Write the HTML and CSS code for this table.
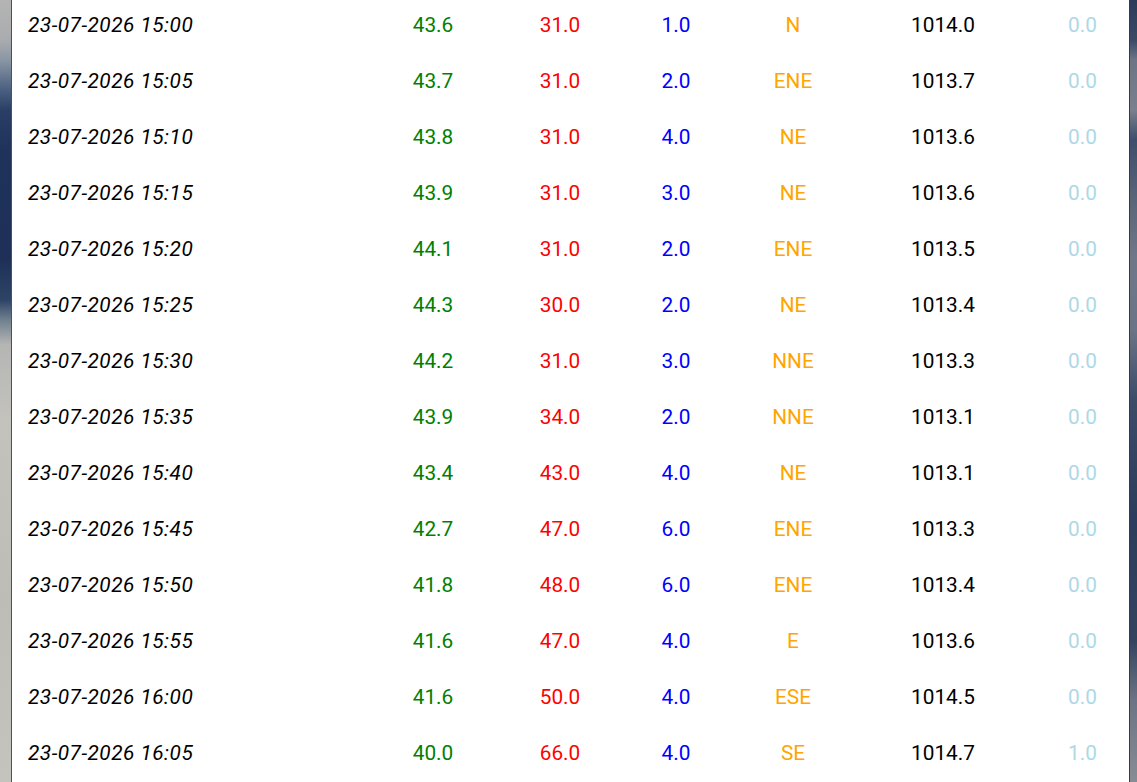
FILE: index.html
```html
<!DOCTYPE html>
<html>
<head>
<meta charset="utf-8">
<link rel="stylesheet" href="styles.css">
<title>Weather log</title>
</head>
<body>
<main class="panel">
<table class="log">
<colgroup>
<col class="c-date"><col class="c-temp"><col class="c-hum"><col class="c-wind"><col class="c-dir"><col class="c-pres"><col class="c-rain">
</colgroup>
<tbody>
<tr><td class="date">23-07-2026 15:00</td><td class="temp">43.6</td><td class="hum">31.0</td><td class="wind">1.0</td><td class="dir">N</td><td class="pres">1014.0</td><td class="rain">0.0</td></tr>
<tr><td class="date">23-07-2026 15:05</td><td class="temp">43.7</td><td class="hum">31.0</td><td class="wind">2.0</td><td class="dir">ENE</td><td class="pres">1013.7</td><td class="rain">0.0</td></tr>
<tr><td class="date">23-07-2026 15:10</td><td class="temp">43.8</td><td class="hum">31.0</td><td class="wind">4.0</td><td class="dir">NE</td><td class="pres">1013.6</td><td class="rain">0.0</td></tr>
<tr><td class="date">23-07-2026 15:15</td><td class="temp">43.9</td><td class="hum">31.0</td><td class="wind">3.0</td><td class="dir">NE</td><td class="pres">1013.6</td><td class="rain">0.0</td></tr>
<tr><td class="date">23-07-2026 15:20</td><td class="temp">44.1</td><td class="hum">31.0</td><td class="wind">2.0</td><td class="dir">ENE</td><td class="pres">1013.5</td><td class="rain">0.0</td></tr>
<tr><td class="date">23-07-2026 15:25</td><td class="temp">44.3</td><td class="hum">30.0</td><td class="wind">2.0</td><td class="dir">NE</td><td class="pres">1013.4</td><td class="rain">0.0</td></tr>
<tr><td class="date">23-07-2026 15:30</td><td class="temp">44.2</td><td class="hum">31.0</td><td class="wind">3.0</td><td class="dir">NNE</td><td class="pres">1013.3</td><td class="rain">0.0</td></tr>
<tr><td class="date">23-07-2026 15:35</td><td class="temp">43.9</td><td class="hum">34.0</td><td class="wind">2.0</td><td class="dir">NNE</td><td class="pres">1013.1</td><td class="rain">0.0</td></tr>
<tr><td class="date">23-07-2026 15:40</td><td class="temp">43.4</td><td class="hum">43.0</td><td class="wind">4.0</td><td class="dir">NE</td><td class="pres">1013.1</td><td class="rain">0.0</td></tr>
<tr><td class="date">23-07-2026 15:45</td><td class="temp">42.7</td><td class="hum">47.0</td><td class="wind">6.0</td><td class="dir">ENE</td><td class="pres">1013.3</td><td class="rain">0.0</td></tr>
<tr><td class="date">23-07-2026 15:50</td><td class="temp">41.8</td><td class="hum">48.0</td><td class="wind">6.0</td><td class="dir">ENE</td><td class="pres">1013.4</td><td class="rain">0.0</td></tr>
<tr><td class="date">23-07-2026 15:55</td><td class="temp">41.6</td><td class="hum">47.0</td><td class="wind">4.0</td><td class="dir">E</td><td class="pres">1013.6</td><td class="rain">0.0</td></tr>
<tr><td class="date">23-07-2026 16:00</td><td class="temp">41.6</td><td class="hum">50.0</td><td class="wind">4.0</td><td class="dir">ESE</td><td class="pres">1014.5</td><td class="rain">0.0</td></tr>
<tr><td class="date">23-07-2026 16:05</td><td class="temp">40.0</td><td class="hum">66.0</td><td class="wind">4.0</td><td class="dir">SE</td><td class="pres">1014.7</td><td class="rain">1.0</td></tr>
</tbody>
</table>
</main>
</body>
</html>
```
FILE: styles.css
```css
html, body {
  margin: 0;
  padding: 0;
  height: 782px;
  overflow: hidden;
}
body {
  font-family: Roboto, "Liberation Sans", sans-serif;
  background:
    linear-gradient(to bottom,
      #2c3b5a 0px, #3a4966 40px, #6d7585 60px, #7a808c 110px,
      #3d4d6c 140px, #5b6579 200px, #707888 260px, #6a7486 330px,
      #3b4b68 400px, #2c3c5c 520px, #33435f 640px, #6c7484 700px,
      #888c94 782px) right top / 7px 100% no-repeat,
    linear-gradient(to bottom,
      #b4b4b3 0px, #a9acaf 40px, #8a96a4 60px, #4a6080 90px,
      #2b3f66 110px, #1f3259 150px, #1e3058 260px, #2e4466 300px,
      #70808f 320px, #b5b6b4 345px, #c3c2bd 420px, #bdbcb7 600px,
      #c4c3be 782px) left top / 11px 100% no-repeat;
  background-color: #8a8f98;
}
.panel {
  margin: 0 7px 0 11px;
  height: 782px;
  background: #ffffff;
  border-left: 1px solid #505050;
  border-right: 1px solid #3a3a3a;
  overflow: hidden;
}
.log {
  width: 100%;
  margin-top: -3px;
  border-collapse: collapse;
  table-layout: fixed;
  font-size: 20.8px;
}
.c-date { width: 351px; }
.c-temp { width: 140px; }
.c-hum { width: 114px; }
.c-wind { width: 118px; }
.c-dir { width: 116px; }
.c-pres { width: 184px; }
.c-rain { width: 95px; }
.log td {
  height: 56px;
  padding: 0;
  text-align: center;
  vertical-align: middle;
  white-space: nowrap;
}
.log td.date {
  text-align: left;
  padding-left: 16px;
  font-style: italic;
  letter-spacing: 0.5px;
  color: #000000;
}
.temp { color: #008000; }
.hum { color: #ff0000; }
.wind { color: #0000ff; }
.dir { color: #ffa500; }
.pres { color: #000000; }
.rain { color: #add8e6; }
```
